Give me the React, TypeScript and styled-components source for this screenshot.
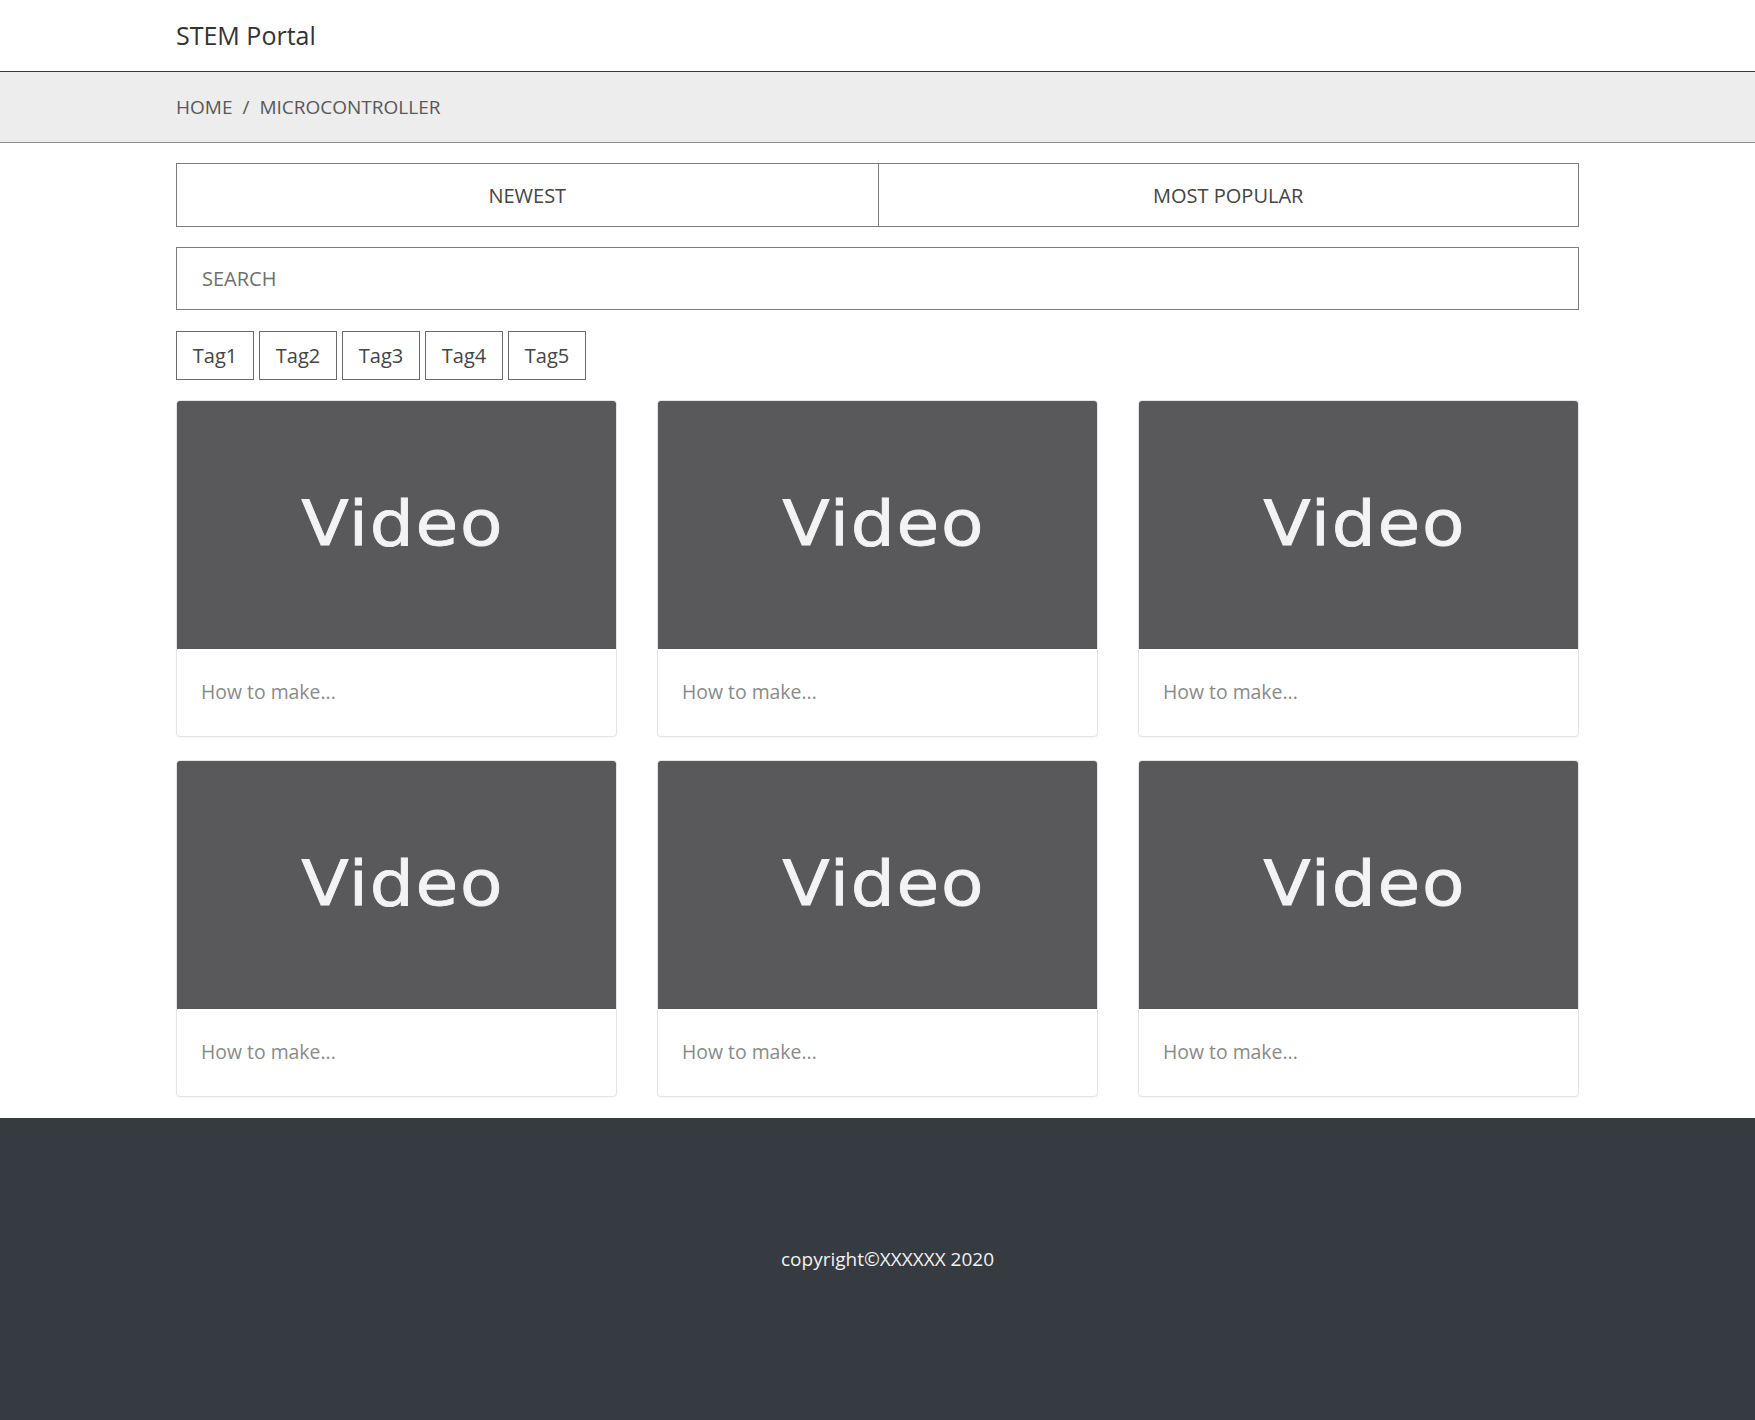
import React from "react";
import styled, { createGlobalStyle } from "styled-components";

const GlobalStyle = createGlobalStyle`
  html, body {
    margin: 0;
    padding: 0;
    background: #ffffff;
    font-family: "Open Sans", "Noto Sans", sans-serif;
    color: #333;
  }
  * { box-sizing: border-box; }
`;

const Page = styled.div`
  display: flex;
  flex-direction: column;
  min-height: 1420px;
`;

const Container = styled.div`
  width: 1403px;
  margin: 0 auto;
`;

const Header = styled.header`
  height: 72px;
  border-bottom: 1px solid #3a3a3a;
  display: flex;
  align-items: center;
`;

const Brand = styled.div`
  font-size: 25px;
  color: #333;
  line-height: 1;
  padding-bottom: 1px;
`;

const BreadcrumbBar = styled.nav`
  height: 71px;
  background: #ededed;
  border-bottom: 1px solid #8c8c8c;
  display: flex;
  align-items: center;
`;

const Crumbs = styled.ol`
  list-style: none;
  margin: 0;
  padding: 0;
  display: flex;
  align-items: center;
  font-size: 19px;
  color: #585858;
  text-transform: uppercase;
`;

const Sep = styled.li`
  padding: 0 10px;
`;

const Main = styled(Container)`
  display: flex;
  flex-direction: column;
  padding: 20px 0 21px;
`;

const Tabs = styled.div`
  display: grid;
  grid-template-columns: 1fr 1fr;
  height: 64px;
  border: 1px solid #7c7c7c;
`;

const Tab = styled.button<{ $divider?: boolean }>`
  border: none;
  border-left: ${(p) => (p.$divider ? "1px solid #7c7c7c" : "none")};
  background: #fff;
  font-family: inherit;
  font-size: 20px;
  color: #444;
  text-transform: uppercase;
  cursor: pointer;
`;

const Search = styled.input`
  margin-top: 20px;
  height: 63px;
  border: 1px solid #7c7c7c;
  padding: 0 25px;
  font-family: inherit;
  font-size: 20px;
  color: #444;
  outline: none;
  &::placeholder {
    color: #6f6f6f;
  }
`;

const TagRow = styled.div`
  margin-top: 21px;
  display: flex;
  gap: 5px;
`;

const Tag = styled.button`
  width: 78px;
  height: 49px;
  border: 1px solid #6a6a6a;
  background: #fff;
  font-family: inherit;
  font-size: 20px;
  color: #444;
  padding: 0;
  cursor: pointer;
`;

const Grid = styled.div`
  margin-top: 20px;
  display: grid;
  grid-template-columns: repeat(3, 1fr);
  column-gap: 40px;
  row-gap: 23px;
`;

const Card = styled.article`
  height: 337px;
  border: 1px solid #e4e4e4;
  border-radius: 4px;
  box-shadow: 0 1px 2px rgba(0, 0, 0, 0.04);
  overflow: hidden;
  display: flex;
  flex-direction: column;
  background: #fff;
`;

const Thumb = styled.div`
  height: 248px;
  background: #59595b;
  display: flex;
  align-items: center;
  justify-content: center;
  padding-bottom: 3px;
`;

const ThumbLabel = styled.span`
  display: inline-block;
  font-family: "DejaVu Sans", "Noto Sans", sans-serif;
  font-size: 62px;
  letter-spacing: 1.5px;
  color: #f3f3f4;
  line-height: 1;
  -webkit-text-stroke: 0.8px #f3f3f4;
  transform: scaleX(1.12);
  margin-left: 12px;
`;

const CardBody = styled.div`
  flex: 1;
  display: flex;
  align-items: center;
  padding: 0 24px;
  font-size: 19.4px;
  color: #8a8a8a;
  padding-bottom: 2px;
`;

const Footer = styled.footer`
  flex: 1;
  height: 302px;
  background: #363a41;
  display: flex;
  justify-content: center;
  padding: 128px 0 0 20px;
`;

const Copy = styled.p`
  margin: 0;
  color: #f2f2f2;
  font-size: 19px;
  line-height: 26px;
`;

const tags = ["Tag1", "Tag2", "Tag3", "Tag4", "Tag5"];
const cards = [1, 2, 3, 4, 5, 6];

export default function App() {
  return (
    <Page>
      <GlobalStyle />
      <Header>
        <Container>
          <Brand>STEM Portal</Brand>
        </Container>
      </Header>
      <BreadcrumbBar>
        <Container>
          <Crumbs>
            <li>Home</li>
            <Sep>/</Sep>
            <li>Microcontroller</li>
          </Crumbs>
        </Container>
      </BreadcrumbBar>
      <Main>
        <Tabs>
          <Tab>Newest</Tab>
          <Tab $divider>Most Popular</Tab>
        </Tabs>
        <Search placeholder="SEARCH" />
        <TagRow>
          {tags.map((t) => (
            <Tag key={t}>{t}</Tag>
          ))}
        </TagRow>
        <Grid>
          {cards.map((c) => (
            <Card key={c}>
              <Thumb>
                <ThumbLabel>Video</ThumbLabel>
              </Thumb>
              <CardBody>How to make...</CardBody>
            </Card>
          ))}
        </Grid>
      </Main>
      <Footer>
        <Copy>copyright©XXXXXX 2020</Copy>
      </Footer>
    </Page>
  );
}
